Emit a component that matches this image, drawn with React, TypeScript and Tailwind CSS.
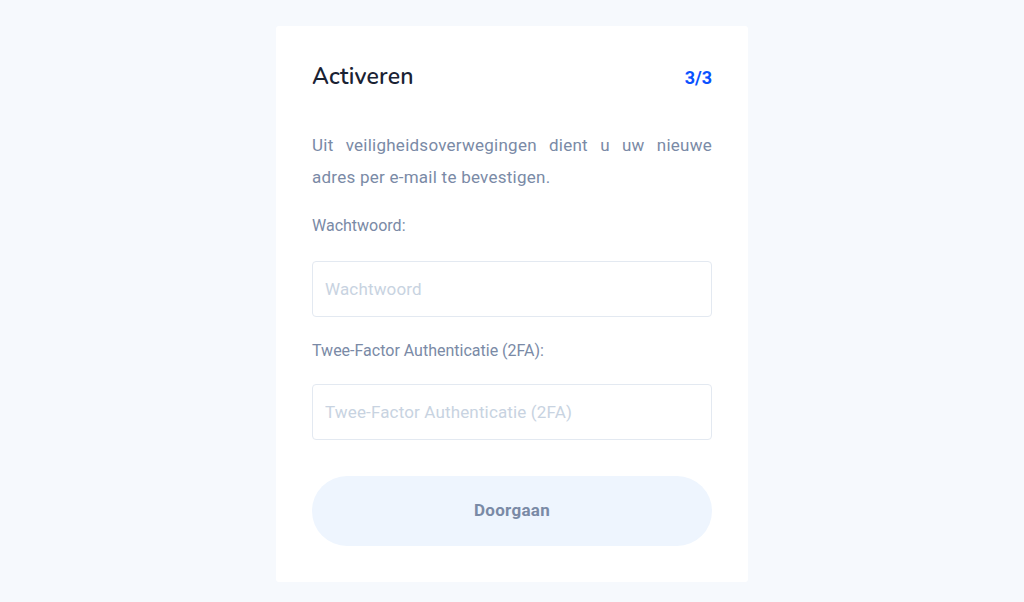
export default function App() {
  return (
    <div className="min-h-[602px] w-full bg-[#f6f9fd] flex justify-center pt-[26px] font-['Roboto',sans-serif]">
      <div className="w-[472px] h-[556px] bg-white rounded-[3px] px-9 pt-9">
        <div className="flex items-center justify-between h-[30px]">
          <h1 className="text-[23px] font-semibold text-[#1a2233] font-['Nunito','Lato',sans-serif] tracking-[0.2px]">
            Activeren
          </h1>
          <span className="text-[18px] font-bold text-[#0a52ff]">3/3</span>
        </div>
        <p className="mt-[37px] text-[17px] leading-[32px] tracking-[0.25px] text-[#7a8aa6] text-justify">
          Uit veiligheidsoverwegingen dient u uw nieuwe adres per e-mail te bevestigen.
        </p>
        <label className="block mt-[21px] text-[16px] leading-[24px] text-[#7a8aa6]">Wachtwoord:</label>
        <input
          type="password"
          placeholder="Wachtwoord"
          className="mt-[23px] block w-full h-[56px] border border-[#e3e9f1] rounded-[4px] px-[12px] text-[17px] tracking-[0.15px] text-[#1a2233] placeholder:text-[#c8d3e1] outline-none"
        />
        <label className="block mt-[22px] text-[16px] leading-[24px] text-[#7a8aa6]">
          Twee-Factor Authenticatie (2FA):
        </label>
        <input
          type="text"
          placeholder="Twee-Factor Authenticatie (2FA)"
          className="mt-[21px] block w-full h-[56px] border border-[#e3e9f1] rounded-[4px] px-[12px] text-[17px] tracking-[0.15px] text-[#1a2233] placeholder:text-[#c8d3e1] outline-none"
        />
        <button className="mt-[36px] w-full h-[70px] rounded-full bg-[#eef5fe] text-[17px] tracking-[0.3px] font-bold text-[#7a8aa6]">
          Doorgaan
        </button>
      </div>
    </div>
  );
}
